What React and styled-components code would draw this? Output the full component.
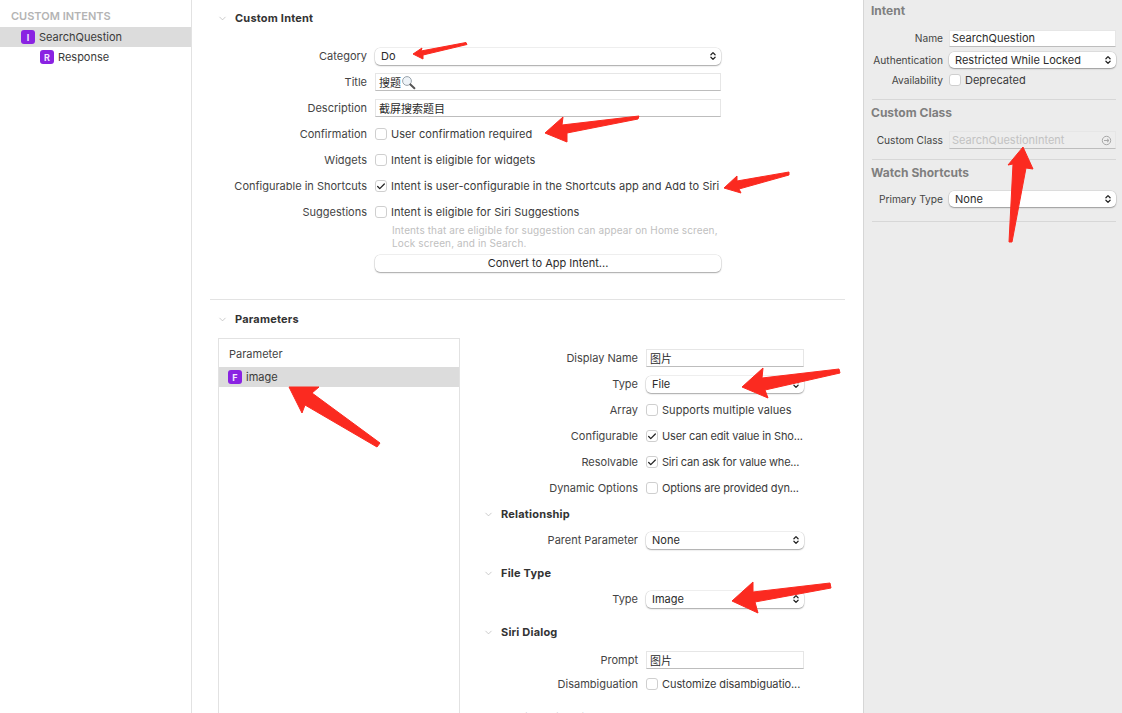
import React from "react";
import styled, { createGlobalStyle } from "styled-components";
import { Check, ChevronDown, ChevronsUpDown } from "lucide-react";

const GlobalStyle = createGlobalStyle`
  * {
    box-sizing: border-box;
    margin: 0;
    padding: 0;
  }
  html, body {
    background: #fff;
    font-family: Inter, "Noto Sans CJK SC", sans-serif;
    font-size: 11px;
    color: #2b2b2b;
  }
`;

const Page = styled.div`
  position: relative;
  display: flex;
  width: 1122px;
  height: 713px;
  overflow: hidden;
  background: #fff;
`;

/* left navigator */
const Sidebar = styled.div`
  width: 192px;
  flex: none;
  padding-top: 9px;
  border-right: 1px solid #e2e2e2;
`;

const SidebarTitle = styled.div`
  height: 18px;
  padding-left: 11px;
  font-size: 11px;
  line-height: 14px;
  font-weight: 600;
  color: #b4b4b4;
`;

const TreeRow = styled.div`
  display: flex;
  align-items: center;
  gap: 4px;
  height: 20px;
  padding-left: ${(p) => p.$indent}px;
  background: ${(p) => (p.$selected ? "#dcdcdc" : "transparent")};
  color: #3a3a3a;
`;

const TypeBadge = styled.span`
  display: flex;
  align-items: center;
  justify-content: center;
  width: 14px;
  height: 14px;
  flex: none;
  border-radius: 3px;
  background: #8a22e2;
  color: #f3e6ff;
  font-size: 9px;
  font-weight: 700;
`;

/* centre editor */
const Editor = styled.div`
  width: 671px;
  flex: none;
`;

const IntentSection = styled.div`
  height: 299px;
  padding-top: 8px;
`;

const SectionHeader = styled.div`
  display: flex;
  align-items: center;
  gap: 7px;
  height: ${(p) => p.$height || 20}px;
  margin-top: ${(p) => p.$top || 0}px;
  padding-left: ${(p) => p.$indent}px;
  font-weight: 700;
  letter-spacing: 0.2px;
  color: #333;
  svg {
    color: #b5b5b5;
    flex: none;
  }
`;

const IntentForm = styled.div`
  display: grid;
  grid-template-columns: 175px 346px;
  grid-auto-rows: 26px;
  column-gap: 8px;
  align-items: center;
  margin-top: 15px;
`;

const FieldLabel = styled.div`
  text-align: right;
  white-space: nowrap;
  color: #444;
`;

const Hint = styled.div`
  width: 346px;
  margin: -1px 0 0 183px;
  padding-left: 17px;
  font-size: 10px;
  line-height: 13px;
  letter-spacing: 0.12px;
  color: #c0c0c0;
`;

const PushButton = styled.div`
  width: 346px;
  height: 17px;
  margin: 5px 0 0 183px;
  border-radius: 5px;
  background: #fff;
  box-shadow: 0 0 0 0.5px rgba(0, 0, 0, 0.12), 0 1px 1.5px rgba(0, 0, 0, 0.3);
  text-align: center;
  line-height: 17px;
  color: #2b2b2b;
`;

const Divider = styled.div`
  height: 1px;
  background: #e3e3e3;
  margin-left: 18px;
  width: 635px;
`;

const ParameterSection = styled.div`
  padding-top: 9px;
`;

const ParameterBody = styled.div`
  display: flex;
  margin-top: 9px;
  padding-left: 26px;
`;

const ParameterList = styled.div`
  width: 242px;
  height: 400px;
  flex: none;
  border: 1px solid #e2e2e2;
`;

const ListHeading = styled.div`
  height: 28px;
  padding: 8px 0 0 10px;
  line-height: 14px;
  color: #444;
`;

const ListRow = styled.div`
  display: flex;
  align-items: center;
  gap: 4px;
  height: 20px;
  padding-left: 9px;
  background: #dcdcdc;
  color: #3a3a3a;
`;

const ParameterDetail = styled.div`
  flex: 1;
  padding-top: 7px;
`;

const DetailRow = styled.div`
  display: grid;
  grid-template-columns: 178px 158px;
  column-gap: 8px;
  align-items: center;
  height: ${(p) => p.$height || 26}px;
  margin-top: ${(p) => p.$top || 0}px;
`;

/* controls */
const Popup = styled.div`
  display: flex;
  align-items: center;
  justify-content: space-between;
  height: ${(p) => p.$height || 17}px;
  padding: 0 3px 0 6px;
  border-radius: 5px;
  background: #fff;
  box-shadow: 0 0 0 0.5px rgba(0, 0, 0, 0.12), 0 1px 1.5px rgba(0, 0, 0, 0.3);
  white-space: nowrap;
  color: #2b2b2b;
  svg {
    flex: none;
    color: #222;
  }
`;

const TextField = styled.div`
  display: flex;
  align-items: center;
  justify-content: space-between;
  height: ${(p) => p.$height || 18}px;
  padding: 0 3px 0 ${(p) => p.$inset ?? 3}px;
  background: ${(p) => (p.$disabled ? "#ededed" : "#fff")};
  border: 1px solid #e6e6e6;
  border-bottom-color: #bdbdbd;
  color: ${(p) => (p.$disabled ? "#c2c2c2" : "#2b2b2b")};
  white-space: nowrap;
`;

const TitleValue = styled.span`
  display: flex;
  align-items: center;
`;

const CheckRow = styled.div`
  display: flex;
  align-items: center;
  gap: 4px;
  white-space: nowrap;
  letter-spacing: ${(p) => p.$spacing ?? 0.06}px;
  color: #3a3a3a;
`;

const Box = styled.span`
  display: flex;
  align-items: center;
  justify-content: center;
  width: 12px;
  height: 12px;
  flex: none;
  border: 1px solid #cfcfcf;
  border-radius: 3px;
  background: #fff;
  color: #222;
`;

/* right inspector */
const Inspector = styled.div`
  flex: 1;
  padding: 3px 6px 0 7px;
  background: #ececec;
  border-left: 1px solid #d6d6d6;
`;

const InspectorTitle = styled.div`
  height: 16px;
  margin-top: ${(p) => p.$top || 0}px;
  font-size: 12px;
  line-height: 16px;
  font-weight: 700;
  color: #7f7f7f;
`;

const InspectorRow = styled.div`
  display: grid;
  grid-template-columns: 72px 167px;
  column-gap: 6px;
  align-items: center;
  height: ${(p) => p.$height || 22}px;
  margin-top: ${(p) => p.$top || 0}px;
`;

const InspectorLabel = styled.div`
  text-align: right;
  font-size: 10.2px;
  white-space: nowrap;
  color: #444;
`;

const InspectorRule = styled.div`
  height: 1px;
  margin-top: ${(p) => p.$top || 0}px;
  margin-left: 1px;
  background: #d7d7d7;
`;

const Annotations = styled.svg`
  position: absolute;
  inset: 0;
  pointer-events: none;
`;

const arrows = [
  "413,54 422,48 421,51 466,42.5 467,44.5 423,55 423,59",
  "545,133 563,117 562,125 639,116 638,119 567,133 567,142",
  "724,188 737,176 737,181 789,172 789,175 739,189 741,193",
  "1023,147 1008,165 1013,164 1009,242 1012,242 1026,168 1033,169",
  "289,387 319,387 312,393 380,443 377,447 305,405 302,413",
  "742,387 763,368 762,378 839,369 840,373 765,390 768,398",
  "732,601 753,582 753,592 830,583 831,588 755,602 758,613",
];

const SearchGlyph = () => (
  <svg width="15" height="15" viewBox="0 0 15 15">
    <circle cx="6" cy="6" r="4.4" fill="#eef3f8" stroke="#9aa3ab" strokeWidth="1" />
    <path d="M9.4 9.4L13.4 13.2" stroke="#555" strokeWidth="2" strokeLinecap="round" />
  </svg>
);

const GoGlyph = () => (
  <svg width="11" height="11" viewBox="0 0 11 11">
    <circle cx="5.5" cy="5.5" r="4.2" fill="none" stroke="#a8a8a8" strokeWidth="1" />
    <path d="M3 5.5H8M6 3.8L8 5.5L6 7.2" fill="none" stroke="#a8a8a8" strokeWidth="1" />
  </svg>
);

const Stepper = () => <ChevronsUpDown size={10} strokeWidth={3} />;

const Disclosure = () => <ChevronDown size={11} strokeWidth={1.5} />;

const CheckField = ({ checked, children, spacing }) => (
  <CheckRow $spacing={spacing}>
    <Box>{checked && <Check size={11} strokeWidth={3} />}</Box>
    {children}
  </CheckRow>
);

export default function App() {
  return (
    <Page>
      <GlobalStyle />

      <Sidebar>
        <SidebarTitle>CUSTOM INTENTS</SidebarTitle>
        <TreeRow $indent={21} $selected>
          <TypeBadge>I</TypeBadge>
          SearchQuestion
        </TreeRow>
        <TreeRow $indent={40}>
          <TypeBadge>R</TypeBadge>
          Response
        </TreeRow>
      </Sidebar>

      <Editor>
        <IntentSection>
          <SectionHeader $indent={25}>
            <Disclosure />
            Custom Intent
          </SectionHeader>
          <IntentForm>
            <FieldLabel>Category</FieldLabel>
            <Popup>
              Do
              <Stepper />
            </Popup>
            <FieldLabel>Title</FieldLabel>
            <TextField>
              <TitleValue>
                搜题
                <SearchGlyph />
              </TitleValue>
            </TextField>
            <FieldLabel>Description</FieldLabel>
            <TextField>截屏搜索题目</TextField>
            <FieldLabel>Confirmation</FieldLabel>
            <CheckField>User confirmation required</CheckField>
            <FieldLabel>Widgets</FieldLabel>
            <CheckField>Intent is eligible for widgets</CheckField>
            <FieldLabel>Configurable in Shortcuts</FieldLabel>
            <CheckField checked>Intent is user-configurable in the Shortcuts app and Add to Siri</CheckField>
            <FieldLabel>Suggestions</FieldLabel>
            <CheckField>Intent is eligible for Siri Suggestions</CheckField>
          </IntentForm>
          <Hint>
            Intents that are eligible for suggestion can appear on Home screen,
            Lock screen, and in Search.
          </Hint>
          <PushButton>Convert to App Intent...</PushButton>
        </IntentSection>

        <Divider />

        <ParameterSection>
          <SectionHeader $indent={25}>
            <Disclosure />
            Parameters
          </SectionHeader>
          <ParameterBody>
            <ParameterList>
              <ListHeading>Parameter</ListHeading>
              <ListRow>
                <TypeBadge>F</TypeBadge>
                image
              </ListRow>
            </ParameterList>

            <ParameterDetail>
              <DetailRow>
                <FieldLabel>Display Name</FieldLabel>
                <TextField>图片</TextField>
              </DetailRow>
              <DetailRow>
                <FieldLabel>Type</FieldLabel>
                <Popup>
                  File
                  <Stepper />
                </Popup>
              </DetailRow>
              <DetailRow>
                <FieldLabel>Array</FieldLabel>
                <CheckField>Supports multiple values</CheckField>
              </DetailRow>
              <DetailRow>
                <FieldLabel>Configurable</FieldLabel>
                <CheckField checked spacing={-0.15}>User can edit value in Sho...</CheckField>
              </DetailRow>
              <DetailRow>
                <FieldLabel>Resolvable</FieldLabel>
                <CheckField checked spacing={-0.2}>Siri can ask for value whe...</CheckField>
              </DetailRow>
              <DetailRow>
                <FieldLabel>Dynamic Options</FieldLabel>
                <CheckField spacing={-0.15}>Options are provided dyn...</CheckField>
              </DetailRow>

              <SectionHeader $indent={23} $height={26}>
                <Disclosure />
                Relationship
              </SectionHeader>
              <DetailRow>
                <FieldLabel>Parent Parameter</FieldLabel>
                <Popup>
                  None
                  <Stepper />
                </Popup>
              </DetailRow>

              <SectionHeader $indent={23} $height={26} $top={7}>
                <Disclosure />
                File Type
              </SectionHeader>
              <DetailRow>
                <FieldLabel>Type</FieldLabel>
                <Popup>
                  Image
                  <Stepper />
                </Popup>
              </DetailRow>

              <SectionHeader $indent={23} $height={26} $top={7}>
                <Disclosure />
                Siri Dialog
              </SectionHeader>
              <DetailRow $height={24} $top={3}>
                <FieldLabel>Prompt</FieldLabel>
                <TextField>图片</TextField>
              </DetailRow>
              <DetailRow $height={24}>
                <FieldLabel>Disambiguation</FieldLabel>
                <CheckField spacing={-0.08}>Customize disambiguatio...</CheckField>
              </DetailRow>
              <DetailRow $top={9}>
                <FieldLabel>Disambiguation Prompt</FieldLabel>
              </DetailRow>
            </ParameterDetail>
          </ParameterBody>
        </ParameterSection>
      </Editor>

      <Inspector>
        <InspectorTitle>Intent</InspectorTitle>
        <InspectorRow $top={8}>
          <InspectorLabel>Name</InspectorLabel>
          <TextField $height={17} $inset={2}>SearchQuestion</TextField>
        </InspectorRow>
        <InspectorRow>
          <InspectorLabel>Authentication</InspectorLabel>
          <Popup $height={16}>
            Restricted While Locked
            <Stepper />
          </Popup>
        </InspectorRow>
        <InspectorRow $height={18}>
          <InspectorLabel>Availability</InspectorLabel>
          <CheckField spacing={0}>Deprecated</CheckField>
        </InspectorRow>
        <InspectorRule $top={10} />
        <InspectorTitle $top={5}>Custom Class</InspectorTitle>
        <InspectorRow $top={8}>
          <InspectorLabel>Custom Class</InspectorLabel>
          <TextField $height={18} $inset={2} $disabled>
            SearchQuestionIntent
            <GoGlyph />
          </TextField>
        </InspectorRow>
        <InspectorRule $top={8} />
        <InspectorTitle $top={5}>Watch Shortcuts</InspectorTitle>
        <InspectorRow $top={7}>
          <InspectorLabel>Primary Type</InspectorLabel>
          <Popup $height={16}>
            None
            <Stepper />
          </Popup>
        </InspectorRow>
        <InspectorRule $top={11} />
      </Inspector>

      <Annotations width="1122" height="713" viewBox="0 0 1122 713">
        {arrows.map((points) => (
          <polygon key={points} points={points} fill="#fb2a20" stroke="#fb2a20" strokeWidth="1" strokeLinejoin="round" />
        ))}
      </Annotations>
    </Page>
  );
}
